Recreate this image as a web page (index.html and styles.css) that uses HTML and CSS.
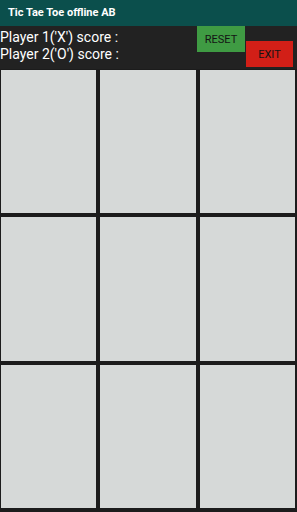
FILE: index.html
```html
<!DOCTYPE html>
<html lang="en">
<head>
  <meta charset="UTF-8">
  <meta name="viewport" content="width=device-width, initial-scale=1.0">
  <title>Tic Tae Toe offline AB</title>
  <link rel="stylesheet" href="styles.css">
</head>
<body>
  <div class="titlebar">Tic Tae Toe offline AB</div>

  <div class="scores">
    <div class="score-text">
      <div>Player 1('X') score :</div>
      <div>Player 2('O') score :</div>
    </div>
    <button class="btn reset">RESET</button>
    <button class="btn exit">EXIT</button>
  </div>

  <div class="board">
    <div class="cell"></div>
    <div class="cell"></div>
    <div class="cell"></div>
    <div class="cell"></div>
    <div class="cell"></div>
    <div class="cell"></div>
    <div class="cell"></div>
    <div class="cell"></div>
    <div class="cell"></div>
  </div>
</body>
</html>
```

FILE: styles.css
```css
html, body {
  margin: 0;
  height: 100%;
}

body {
  font-family: Roboto, "Noto Sans", sans-serif;
  background-color: #1c1c1c;
  display: flex;
  flex-direction: column;
}

.titlebar {
  height: 26px;
  line-height: 26px;
  padding-left: 8px;
  background-color: #0b4f4c;
  color: #fff;
  font-size: 11px;
  font-weight: bold;
}

.scores {
  height: 43px;
  display: flex;
  background-color: #222;
}

.score-text {
  flex: 1;
  color: #fff;
  font-size: 14px;
  line-height: 17px;
  padding-top: 3px;
}

.btn {
  border: none;
  padding: 0;
  font-family: Roboto, sans-serif;
  font-size: 11px;
  color: #141414;
}

.reset {
  width: 48px;
  height: 26px;
  margin-right: 1px;
  background-color: #3f9b43;
}

.exit {
  width: 47px;
  height: 26px;
  margin-top: 15px;
  margin-right: 4px;
  background-color: #d21f17;
}

.board {
  flex: 1;
  display: grid;
  grid-template-columns: repeat(3, 1fr);
  grid-template-rows: repeat(3, 1fr);
  gap: 4px;
  padding: 1px 2px 4px 1px;
}

.cell {
  background-color: #d6d9d8;
}
```
